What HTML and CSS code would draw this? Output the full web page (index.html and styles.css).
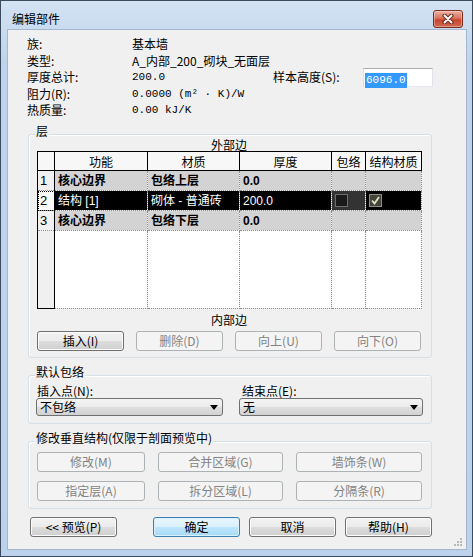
FILE: index.html
```html
<!DOCTYPE html>
<html>
<head>
    <meta charset="utf-8" />
    <title>编辑部件</title>
    <link rel="stylesheet" href="styles.css">
</head>
<body>
<div class="window">
    <div class="titlebar">
        <span class="title">编辑部件</span>
        <button class="close" type="button">
            <svg width="14" height="10" viewBox="0 0 14 10">
                <path d="M3.5 1.5 L10.5 8.5 M10.5 1.5 L3.5 8.5" stroke="#6b2418" stroke-width="4" stroke-linecap="round"/>
                <path d="M3.5 1.5 L10.5 8.5 M10.5 1.5 L3.5 8.5" stroke="#fff" stroke-width="2" stroke-linecap="round"/>
            </svg>
        </button>
    </div>
    <div class="client">
        <div class="info">
            <span class="k">族:</span><span class="v">基本墙</span>
            <span class="k">类型:</span><span class="v">A_内部_200_砌块_无面层</span>
            <span class="k">厚度总计:</span><span class="v num">200.0</span>
            <span class="sample-label">样本高度(S):</span>
            <span class="sample-input"><span class="selected num">6096.0</span></span>
            <span class="k">阻力(R):</span><span class="v num">0.0000 (m² · K)/W</span>
            <span class="k">热质量:</span><span class="v num">0.00 kJ/K</span>
        </div>

        <div class="group layers">
            <div class="group-title">层</div>
            <div class="edge">外部边</div>
            <table class="grid">
                <colgroup>
                    <col style="width:17px"><col style="width:93px"><col style="width:92px">
                    <col style="width:92px"><col style="width:34px"><col style="width:56px">
                </colgroup>
                <thead>
                    <tr><th class="rn"></th><th>功能</th><th>材质</th><th>厚度</th><th>包络</th><th>结构材质</th></tr>
                </thead>
                <tbody>
                    <tr class="core"><td class="rn">1</td><td>核心边界</td><td>包络上层</td><td>0.0</td><td></td><td></td></tr>
                    <tr class="sel"><td class="rn">2</td><td>结构 [1]</td><td>砌体 - 普通砖</td><td>200.0</td><td class="wrap"><span class="check"></span></td><td><span class="check on"><svg width="11" height="11" viewBox="0 0 11 11"><path d="M2 5.5 L4.5 8.5 L9 2" fill="none" stroke="#e4e2c4" stroke-width="1.8"/></svg></span></td></tr>
                    <tr class="core"><td class="rn">3</td><td>核心边界</td><td>包络下层</td><td>0.0</td><td></td><td></td></tr>
                    <tr class="filler"><td class="rn"></td><td></td><td></td><td></td><td></td><td></td></tr>
                </tbody>
            </table>
            <div class="edge inner">内部边</div>
            <div class="row4">
                <button class="btn" type="button">插入(I)</button>
                <button class="btn off" type="button">删除(D)</button>
                <button class="btn off" type="button">向上(U)</button>
                <button class="btn off" type="button">向下(O)</button>
            </div>
        </div>

        <div class="group wrapping">
            <div class="group-title">默认包络</div>
            <div class="combos">
                <div class="field">
                    <span class="lbl">插入点(N):</span>
                    <div class="combo"><span>不包络</span><svg width="8" height="5" viewBox="0 0 8 5"><path d="M0 0 H8 L4 5 Z" fill="#000"/></svg></div>
                </div>
                <div class="field">
                    <span class="lbl second">结束点(E):</span>
                    <div class="combo"><span>无</span><svg width="8" height="5" viewBox="0 0 8 5"><path d="M0 0 H8 L4 5 Z" fill="#000"/></svg></div>
                </div>
            </div>
        </div>

        <div class="group modify">
            <div class="group-title">修改垂直结构(仅限于剖面预览中)</div>
            <div class="row3">
                <button class="btn off" type="button">修改(M)</button>
                <button class="btn off" type="button">合并区域(G)</button>
                <button class="btn off" type="button">墙饰条(W)</button>
                <button class="btn off" type="button">指定层(A)</button>
                <button class="btn off" type="button">拆分区域(L)</button>
                <button class="btn off" type="button">分隔条(R)</button>
            </div>
        </div>

        <div class="footer">
            <button class="btn" type="button">&lt;&lt; 预览(P)</button>
            <button class="btn default ok" type="button">确定</button>
            <button class="btn" type="button">取消</button>
            <button class="btn" type="button">帮助(H)</button>
        </div>

        <svg class="grip" width="9" height="9" viewBox="0 0 9 9">
            <rect x="6" y="0" width="2" height="2" fill="#b8b8b8"/>
            <rect x="3" y="3" width="2" height="2" fill="#b8b8b8"/>
            <rect x="6" y="3" width="2" height="2" fill="#b8b8b8"/>
            <rect x="0" y="6" width="2" height="2" fill="#b8b8b8"/>
            <rect x="3" y="6" width="2" height="2" fill="#b8b8b8"/>
            <rect x="6" y="6" width="2" height="2" fill="#b8b8b8"/>
        </svg>
    </div>
</div>
</body>
</html>
```

FILE: styles.css
```css
*{box-sizing: border-box;}
body{
    margin: 0;
    background: #fff;
    font-family: "Noto Sans CJK SC", sans-serif;
    font-size: 12px;
    color: #000;
}
.window{
    width: 473px;
    height: 557px;
    border: 1px solid #3b4a5c;
    background: linear-gradient(#d3e2f3, #bfd4ec 60px, #bcd2eb);
}
.titlebar{
    height: 29px;
    display: flex;
    justify-content: space-between;
    align-items: flex-start;
    padding: 9px 9px 0 11px;
}
.title{
    line-height: 16px;
    margin-top: 1px;
}
.close{
    width: 30px;
    height: 18px;
    padding: 0;
    border: 1px solid #7a2c1f;
    border-radius: 3px;
    background: linear-gradient(#eab2a3, #d8735e 45%, #c7452f 55%, #d06a50);
    box-shadow: inset 0 0 0 1px rgba(255,255,255,0.35);
    display: flex;
    align-items: center;
    justify-content: center;
}
.client{
    position: relative;
    margin: 0 6px 0 7px;
    height: 519px;
    background: #f0f0f0;
    box-shadow: 0 0 0 1px #a3b8cf;
    padding: 6px 0 0 20px;
}

/* info block */
.info{
    display: grid;
    grid-template-columns: 105px 141px 90px 70px;
    grid-template-rows: repeat(5, 16.5px);
    line-height: 16.5px;
    margin-left: -1px;
    white-space: nowrap;
}
.k{grid-column: 1;}
.v{grid-column: 2;}
.num{
    font-family: "Liberation Mono", "Noto Sans CJK SC", monospace;
    font-size: 11px;
}
.sample-label{grid-column: 3; grid-row: 3;}
.sample-input{
    grid-column: 4;
    grid-row: 3;
    height: 19px;
    margin-top: -1px;
    border: 1px solid;
    border-color: #abadb3 #e2e3ea #e3e9ef #dbdfe6;
    background: #fff;
    padding: 1px 0 0 1px;
    line-height: 15px;
}
.selected{
    display: inline-block;
    background: #3399ff;
    color: #fff;
    padding: 0 1px;
}

/* group boxes */
.group{
    width: 404px;
    border: 1px solid #d5dfe5;
    border-radius: 3px;
    box-shadow: 1px 1px 0 #fff inset;
}
.group-title{
    width: fit-content;
    margin: -11px 0 0 6px;
    padding: 0 1px;
    line-height: 14px;
    background: #f0f0f0;
}
.layers{
    margin-top: 15.5px;
    padding-bottom: 6px;
}
.edge{
    text-align: center;
    line-height: 13px;
    margin-left: 8px;
    width: 384px;
}
.edge.inner{
    line-height: 14px;
    margin-top: 4px;
}

/* layer table */
.grid{
    margin-left: 8px;
    width: 384px;
    table-layout: fixed;
    border-collapse: collapse;
    font-family: "Liberation Sans", "Noto Sans CJK SC", sans-serif;
    font-size: 12px;
}
.grid th{
    height: 19px;
    border: 1px solid #000;
    background: #f7f7f7;
    font-weight: normal;
    font-family: "Noto Sans CJK SC", sans-serif;
    padding: 0;
    line-height: 17px;
}
.grid td{
    height: 20px;
    border: 1px dotted #8c8c8c;
    padding: 0 3px;
    white-space: nowrap;
    overflow: hidden;
    line-height: 18px;
}
.grid td.rn{
    background: #f0f0f0;
    border-left: 1px solid #000;
    border-right: 1px solid #000;
    font-size: 13px;
    padding: 0 2px;
}
.core td{
    background: #d3d3d3;
    font-weight: bold;
}
.core td.rn{font-weight: normal;}
.sel td{
    background: #000;
    color: #fff;
}
.sel td.rn{
    background: #fafafa;
    color: #000;
    outline: 1px dotted #000;
    outline-offset: -1px;
}
.sel td.wrap{background: #333;}
.filler td{
    height: 78px;
    background: #fff;
}
.filler td.rn{
    background: #f0f0f0;
    border-bottom: 1px solid #000;
}
.check{
    display: inline-block;
    width: 13px;
    height: 13px;
    vertical-align: middle;
    margin-top: -2px;
    border: 1px solid #6d6d6d;
    background: #1a1a1a;
}
.check.on{
    border-color: #8d8c80;
    background: #45443a;
}
.check svg{display: block;}

/* buttons */
.btn{
    height: 20px;
    padding: 0;
    border: 1px solid #707070;
    border-radius: 3px;
    background: linear-gradient(#f2f2f2 0%, #ebebeb 50%, #dddddd 50%, #cfcfcf 100%);
    box-shadow: inset 0 0 0 1px #fcfcfc;
    font-family: "Noto Sans CJK SC", sans-serif;
    font-size: 12px;
    line-height: 16px;
    color: #000;
}
.btn.off{
    border-color: #adb2b5;
    background: #f4f4f4;
    box-shadow: none;
    color: #838383;
}
.btn.default{
    border-color: #3c7fb1;
    background: linear-gradient(#eaf6fd 0%, #d9f0fc 50%, #bee6fd 50%, #a7d9f5 100%);
    box-shadow: inset 0 0 0 1px #d8f0ff;
}
.row4{
    display: grid;
    grid-template-columns: repeat(4, 87px);
    gap: 12px;
    margin: 4px 0 0 8px;
}

/* default wrapping */
.wrapping{
    margin-top: 17px;
    padding-bottom: 7px;
}
.combos{
    display: grid;
    grid-template-columns: 187px 184px;
    gap: 16px;
    margin: 5px 0 0 7px;
}
.lbl{
    display: block;
    line-height: 14px;
    padding-left: 1px;
}
.lbl.second{padding-left: 3px;}
.combo{
    height: 18px;
    display: flex;
    justify-content: space-between;
    align-items: center;
    padding: 0 4px 0 3px;
    border: 1px solid #707070;
    border-radius: 3px;
    background: linear-gradient(#f4f4f4 0%, #ececec 50%, #dfdfdf 50%, #d2d2d2 100%);
    line-height: 16px;
}

/* modify vertical structure */
.modify{
    margin-top: 17px;
    padding-bottom: 7px;
}
.row3{
    display: grid;
    grid-template-columns: 108px 125px 126px;
    column-gap: 13px;
    row-gap: 9px;
    margin: 7px 0 0 8px;
}

/* footer buttons */
.footer{
    display: flex;
    gap: 9px;
    margin: 8px 0 0 2px;
}
.footer .btn{width: 87px;}
.footer .ok{margin-left: 27px;}
.grip{
    position: absolute;
    right: 3px;
    bottom: 2px;
}
```
